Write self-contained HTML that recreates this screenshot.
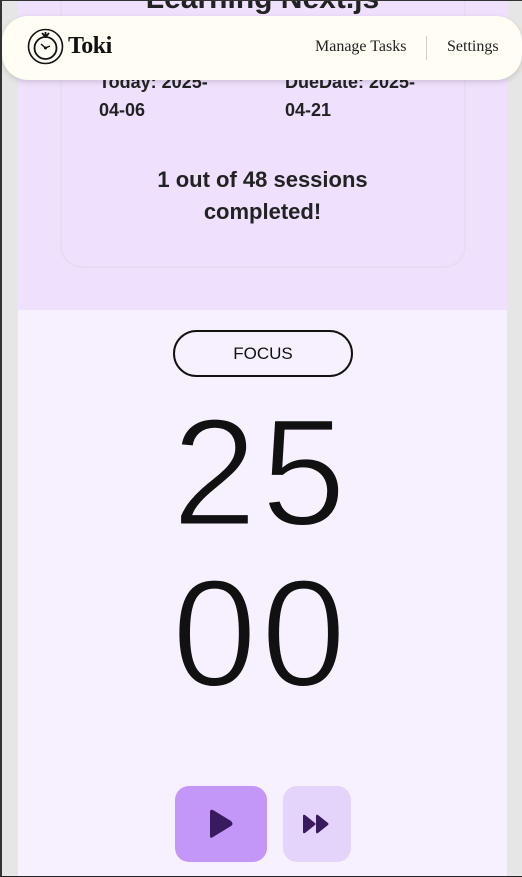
<!DOCTYPE html>
<html><head><style>
*{margin:0;padding:0;box-sizing:border-box}
body{width:522px;height:877px;overflow:hidden;background:#e6e6e6;font-family:"Liberation Sans",sans-serif;position:relative}
.lb{position:absolute;left:0;top:0;width:2px;height:877px;background:#333}
.tb{position:absolute;left:0;top:0;width:522px;height:1px;background:#333}
.bb{position:absolute;left:0;top:876px;width:522px;height:1px;background:#222}
.main{position:absolute;left:18px;top:0;width:489px;height:876px;background:#f7f0fe}
.top{position:absolute;left:0;top:0;width:489px;height:310px;background:#efe0fd}
.card{position:absolute;left:42px;top:-40px;width:406px;height:308px;border:2px solid #e8dcf4;border-radius:22px}
.t{position:absolute;font-size:18px;color:#222;font-weight:bold;line-height:28px}
.title{position:absolute;left:0;width:489px;text-align:center;top:-18px;font-size:30px;font-weight:bold;color:#222}
.done{position:absolute;left:0;width:489px;top:164px;text-align:center;font-size:22px;font-weight:bold;line-height:32px;color:#222}
.hdr{position:absolute;left:2px;top:16px;width:520px;height:64px;background:#fffdf4;border-radius:26px;box-shadow:0 2px 6px rgba(0,0,0,.15)}
.logo{position:absolute;left:68px;top:33px;font-family:"Liberation Serif",serif;font-weight:bold;font-size:24px;color:#111;letter-spacing:-0.5px}
.nav{position:absolute;top:38px;font-family:"Liberation Serif",serif;font-size:16px;color:#222}
.sep{position:absolute;left:426px;top:36px;width:1px;height:24px;background:#ccc}
.focus{position:absolute;left:173px;top:330px;width:180px;height:47px;border:2px solid #111;border-radius:24px;text-align:center;line-height:43px;font-size:17px;color:#111}
.dig{position:absolute;left:0;width:522px;text-align:center;font-size:153px;color:#111;font-weight:normal;line-height:160px;letter-spacing:4px;-webkit-text-stroke:3px #f7f0fe;paint-order:normal}
.play{position:absolute;left:175px;top:786px;width:92px;height:76px;background:#c397f8;border-radius:14px}
.skip{position:absolute;left:283px;top:786px;width:68px;height:76px;background:#e4d3fb;border-radius:14px}
</style></head><body>
<div class="main">
 <div class="top">
  <div class="card"></div>
  <div class="title">Learning Next.js</div>
  <div class="t" style="left:81px;top:68px">Today: 2025-<br>04-06</div>
  <div class="t" style="left:267px;top:68px">DueDate: 2025-<br>04-21</div>
  <div class="done">1 out of 48 sessions<br>completed!</div>
 </div>
</div>
<div class="lb"></div><div class="tb"></div><div class="bb"></div>
<div class="hdr"></div>
<svg style="position:absolute;left:27px;top:28px" width="37" height="37" viewBox="0 0 37 37" fill="none" stroke="#111">
 <circle cx="18.5" cy="18.5" r="17" stroke-width="1.6"/>
 <circle cx="18.5" cy="20" r="11" stroke-width="1.8"/>
 <path d="M18.5 9 L15 5 M18.5 9 L22 5 M18.5 9 V4" stroke-width="1.8"/>
 <path d="M18.5 20 L14 16 M18.5 20 L23 18" stroke-width="1.4"/>
 <circle cx="18.5" cy="20" r="1" fill="#111"/>
</svg>
<div class="logo">Toki</div>
<div class="nav" style="left:315px">Manage Tasks</div>
<div class="sep"></div>
<div class="nav" style="left:447px">Settings</div>
<div class="focus">FOCUS</div>
<div class="dig" style="top:393px">25</div>
<div class="dig" style="top:554px">00</div>
<div class="play"><svg width="92" height="76" viewBox="0 0 92 76"><path d="M35 26 Q35 23 38 24 L56 35 Q59 38 56 40 L38 51 Q35 53 35 50 Z" fill="#3a1a5e"/></svg></div>
<div class="skip"><svg width="68" height="76" viewBox="0 0 68 76"><path d="M20 30 Q20 28 22 29 L32 37 Q33 38 32 39 L22 47 Q20 48 20 46 Z M33 30 Q33 28 35 29 L45 37 Q46 38 45 39 L35 47 Q33 48 33 46 Z" fill="#3a1a5e"/></svg></div>
</body></html>
